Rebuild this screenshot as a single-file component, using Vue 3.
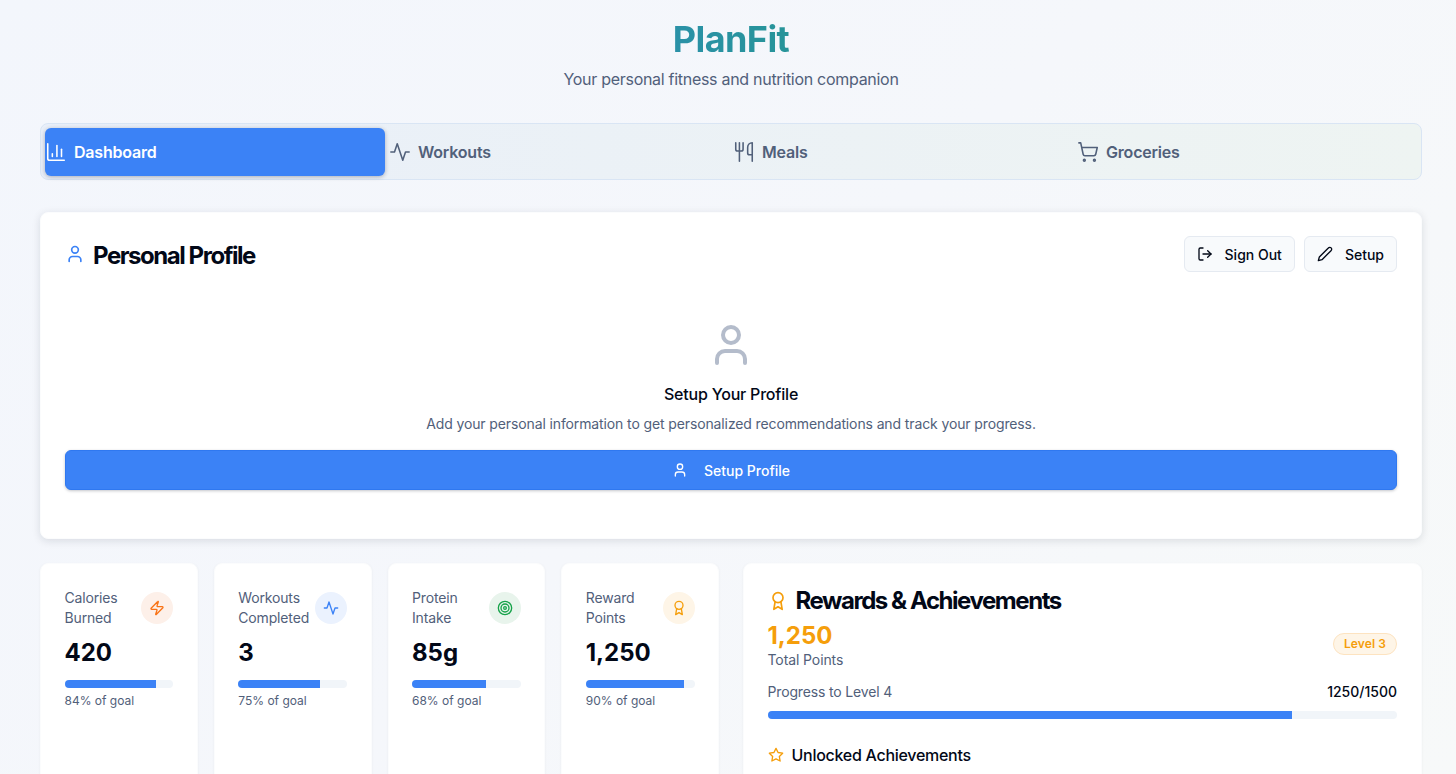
<script setup>
const circle = (cx, cy, r) => `M${cx - r} ${cy}a${r} ${r} 0 1 0 ${r * 2} 0a${r} ${r} 0 1 0 ${-r * 2} 0`

const icons = {
  chart: ['M3 3v16a2 2 0 0 0 2 2h16', 'M18 17V9', 'M13 17V5', 'M8 17v-3'],
  activity: ['M22 12h-4l-3 9L9 3l-3 9H2'],
  meals: ['M3 2v7c0 1.1.9 2 2 2h4a2 2 0 0 0 2-2V2', 'M7 2v20', 'M21 15V2a5 5 0 0 0-5 5v6c0 1.1.9 2 2 2h3Zm0 0v7'],
  cart: [circle(8, 21, 1), circle(19, 21, 1), 'M2.05 2.05h2l2.66 12.42a2 2 0 0 0 2 1.58h9.78a2 2 0 0 0 1.95-1.57l1.65-7.43H5.12'],
  zap: ['M4 14a1 1 0 0 1-.78-1.63l9.9-10.2a.5.5 0 0 1 .86.46l-1.92 6.02A1 1 0 0 0 13 10h7a1 1 0 0 1 .78 1.63l-9.9 10.2a.5.5 0 0 1-.86-.46l1.92-6.02A1 1 0 0 0 11 14z'],
  target: [circle(12, 12, 10), circle(12, 12, 6), circle(12, 12, 2)],
  award: [circle(12, 8, 6), 'M15.477 12.89 17 22l-5-3-5 3 1.523-9.11'],
  user: ['M19 21v-2a4 4 0 0 0-4-4H9a4 4 0 0 0-4 4v2', circle(12, 7, 4)],
}

const tabs = [
  { label: 'Dashboard', icon: 'chart', active: true },
  { label: 'Workouts', icon: 'activity' },
  { label: 'Meals', icon: 'meals' },
  { label: 'Groceries', icon: 'cart' },
]

const stats = [
  { label: 'Calories Burned', value: '420', percent: 84, icon: 'zap', tone: 'orange' },
  { label: 'Workouts Completed', value: '3', percent: 75, icon: 'activity', tone: 'blue' },
  { label: 'Protein Intake', value: '85g', percent: 68, icon: 'target', tone: 'green' },
  { label: 'Reward Points', value: '1,250', percent: 90, icon: 'award', tone: 'amber' },
]
</script>

<template>
  <div class="page">
    <header class="hero">
      <h1 class="brand">PlanFit</h1>
      <p class="tagline">Your personal fitness and nutrition companion</p>
    </header>

    <nav class="tabs">
      <button v-for="tab in tabs" :key="tab.label" class="tab" :class="{ active: tab.active }">
        <svg class="tab-icon" viewBox="0 0 24 24"><path v-for="d in icons[tab.icon]" :key="d" :d="d" /></svg>
        {{ tab.label }}
      </button>
    </nav>

    <section class="card profile">
      <div class="profile-head">
        <h2 class="card-title">
          <svg class="title-icon blue" viewBox="0 0 24 24"><path v-for="d in icons.user" :key="d" :d="d" /></svg>
          <span class="profile-title-text">Personal Profile</span>
        </h2>
        <div class="actions">
          <button class="ghost">
            <svg class="btn-icon" viewBox="0 0 24 24">
              <path d="M9 21H5a2 2 0 0 1-2-2V5a2 2 0 0 1 2-2h4" />
              <path d="M16 17l5-5-5-5" />
              <path d="M21 12H9" />
            </svg>
            Sign Out
          </button>
          <button class="ghost">
            <svg class="btn-icon" viewBox="0 0 24 24">
              <path d="M17 3a2.85 2.83 0 1 1 4 4L7.5 20.5 2 22l1.5-5.5Z" />
            </svg>
            Setup
          </button>
        </div>
      </div>

      <div class="empty">
        <svg class="empty-icon" viewBox="0 0 24 24"><path v-for="d in icons.user" :key="d" :d="d" /></svg>
        <h3 class="empty-title">Setup Your Profile</h3>
        <p class="empty-text">Add your personal information to get personalized recommendations and track your progress.</p>
        <button class="primary">
          <svg class="btn-icon" viewBox="0 0 24 24"><path v-for="d in icons.user" :key="d" :d="d" /></svg>
          Setup Profile
        </button>
      </div>
    </section>

    <div class="lower">
      <div class="stats">
        <div v-for="stat in stats" :key="stat.label" class="card stat">
          <div class="stat-head">
            <span class="stat-label">{{ stat.label }}</span>
            <span class="stat-badge" :class="stat.tone">
              <svg class="stat-icon" viewBox="0 0 24 24"><path v-for="d in icons[stat.icon]" :key="d" :d="d" /></svg>
            </span>
          </div>
          <div class="stat-value">{{ stat.value }}</div>
          <div class="bar"><div class="fill" :style="{ width: stat.percent + '%' }"></div></div>
          <div class="stat-note">{{ stat.percent }}% of goal</div>
        </div>
      </div>

      <section class="card rewards">
        <h2 class="card-title rewards-title">
          <svg class="title-icon amber-text" viewBox="0 0 24 24"><path v-for="d in icons.award" :key="d" :d="d" /></svg>
          Rewards &amp; Achievements
        </h2>
        <div class="points-row">
          <div>
            <div class="points">1,250</div>
            <div class="points-label">Total Points</div>
          </div>
          <span class="level">Level 3</span>
        </div>
        <div class="progress-row">
          <span class="progress-label">Progress to Level 4</span>
          <span class="progress-count">1250/1500</span>
        </div>
        <div class="bar"><div class="fill" style="width: 83.33%"></div></div>
        <h3 class="unlocked">
          <svg class="btn-icon amber-text" viewBox="0 0 24 24">
            <path d="M12 2l3.09 6.26L22 9.27l-5 4.87 1.18 6.88L12 17.77l-6.18 3.25L7 14.14 2 9.27l6.91-1.01L12 2z" />
          </svg>
          Unlocked Achievements
        </h3>
      </section>
    </div>
  </div>
</template>

<style scoped>
.page {
  height: 100vh;
  overflow: hidden;
  box-sizing: border-box;
  padding: 19px 34px 0 40px;
  font-family: Inter, "Liberation Sans", sans-serif;
  color: #020817;
  background: linear-gradient(135deg, #f3f6fc 0%, #f5f7fb 50%, #f7f9f9 100%);
}

svg {
  fill: none;
  stroke: currentColor;
  stroke-width: 2;
  stroke-linecap: round;
  stroke-linejoin: round;
  flex-shrink: 0;
}

button {
  font-family: inherit;
}

.hero {
  text-align: center;
  margin-bottom: 32px;
}

.brand {
  margin: 0 0 8px;
  font-size: 36px;
  line-height: 40px;
  font-weight: 700;
  letter-spacing: -0.6px;
  background: linear-gradient(90deg, #3b82f6, #16a34a);
  -webkit-background-clip: text;
  background-clip: text;
  color: transparent;
}

.tagline {
  margin: 0;
  font-size: 16px;
  line-height: 24px;
  letter-spacing: -0.29px;
  color: #51607a;
}

.tabs {
  display: grid;
  grid-template-columns: repeat(4, 1fr);
  gap: 4px;
  padding: 4px 4px 3px;
  height: 57px;
  box-sizing: border-box;
  border: 1px solid #d9e5f4;
  border-radius: 8px;
  background: linear-gradient(90deg, #e9eff9, #eef4f2);
  margin-bottom: 32px;
}

.tab {
  display: flex;
  align-items: center;
  gap: 7px;
  padding: 0;
  border: none;
  border-radius: 6px;
  background: none;
  font-size: 16px;
  font-weight: 600;
  letter-spacing: -0.2px;
  color: #51607a;
}

.tab.active {
  background: #3b82f6;
  color: #fff;
  box-shadow: 0 1px 4px rgba(15, 23, 42, 0.3);
}

.tab-icon {
  width: 22px;
  height: 22px;
  stroke-width: 1.7;
}

.card {
  box-sizing: border-box;
  background: #fff;
  border: 1px solid #fbfcfd;
  border-radius: 8px;
  box-shadow: 0 1px 3px rgba(15, 23, 42, 0.05);
}

.profile {
  padding: 23px 24px 24px;
  margin-bottom: 24px;
  box-shadow: 0 2px 8px rgba(15, 23, 42, 0.12);
}

.profile-head {
  display: flex;
  justify-content: space-between;
  align-items: center;
}

.card-title {
  display: flex;
  align-items: center;
  gap: 8px;
  margin: 0;
  font-size: 24px;
  line-height: 32px;
  font-weight: 700;
  letter-spacing: -1.45px;
}

.profile-title-text {
  padding-top: 3px;
}

.title-icon {
  width: 20px;
  height: 20px;
}

.blue {
  color: #3b82f6;
}

.amber-text {
  color: #f59e0b;
}

.actions {
  display: flex;
  gap: 9px;
}

.ghost {
  display: flex;
  align-items: center;
  gap: 12px;
  height: 36px;
  padding: 0 12px;
  border: 1px solid #e5eaf1;
  border-radius: 6px;
  background: #f8fafc;
  font-size: 14px;
  font-weight: 500;
  color: #020817;
}

.btn-icon {
  width: 16px;
  height: 16px;
}

.empty {
  display: flex;
  flex-direction: column;
  align-items: center;
  padding: 49px 0 24px;
}

.empty-icon {
  width: 48px;
  height: 48px;
  color: #b4bccb;
  margin-bottom: 13px;
}

.empty-title {
  margin: 0 0 8px;
  font-size: 16px;
  line-height: 24px;
  font-weight: 500;
  letter-spacing: -0.2px;
}

.empty-text {
  margin: 0 0 16px;
  font-size: 14px;
  line-height: 20px;
  letter-spacing: -0.12px;
  color: #51607a;
}

.primary {
  display: flex;
  align-items: center;
  justify-content: center;
  gap: 16px;
  width: 100%;
  height: 40px;
  border: 1px solid #2f78f0;
  border-radius: 6px;
  background: #3b82f6;
  color: #fff;
  font-size: 14px;
  font-weight: 500;
  box-shadow: 0 1px 3px rgba(15, 23, 42, 0.25);
}

.lower {
  display: grid;
  grid-template-columns: 1fr 1fr;
  gap: 24px;
  min-height: 320px;
}

.stats {
  display: grid;
  grid-template-columns: repeat(4, 1fr);
  gap: 16px;
}

.stat {
  padding: 24px 23.5px;
}

.stat-head {
  display: flex;
  justify-content: space-between;
  align-items: center;
}

.stat-label {
  font-size: 14px;
  line-height: 20px;
  letter-spacing: -0.15px;
  color: #51607a;
  max-width: 72px;
}

.stat-badge {
  display: flex;
  align-items: center;
  justify-content: center;
  width: 32px;
  height: 32px;
  border-radius: 50%;
  flex-shrink: 0;
}

.stat-icon {
  width: 16px;
  height: 16px;
}

.orange {
  background: #fdf0e9;
  color: #f97316;
}

.stat-badge.blue {
  background: #ebf2fe;
  color: #3b82f6;
}

.green {
  background: #e8f4ec;
  color: #16a34a;
}

.amber {
  background: #fef5e7;
  color: #f59e0b;
}

.stat-value {
  margin: 9px 0 11px;
  font-size: 24px;
  line-height: 32px;
  font-weight: 700;
}

.bar {
  height: 8px;
  border-radius: 4px;
  background: #f1f5f9;
  overflow: hidden;
}

.fill {
  height: 100%;
  background: #3b82f6;
}

.stat-note {
  margin-top: 5px;
  font-size: 12px;
  line-height: 16px;
  color: #51607a;
}

.rewards {
  padding: 24px 24px 24px 23.5px;
}

.rewards-title {
  line-height: 26px;
  margin-bottom: 6px;
}

.points-row {
  display: flex;
  justify-content: space-between;
  align-items: center;
  margin-bottom: 12px;
}

.points {
  font-size: 24px;
  line-height: 32px;
  font-weight: 700;
  color: #f59e0b;
  margin-bottom: -2px;
}

.points-label {
  font-size: 14px;
  line-height: 20px;
  letter-spacing: -0.1px;
  color: #51607a;
}

.level {
  padding: 2px 10px;
  margin-bottom: 2px;
  border: 1px solid #fde3c0;
  border-radius: 999px;
  background: #fef5e7;
  font-size: 12px;
  line-height: 16px;
  font-weight: 600;
  letter-spacing: 0.1px;
  color: #f59e0b;
}

.progress-row {
  display: flex;
  justify-content: space-between;
  margin-bottom: 9px;
  font-size: 14px;
  line-height: 20px;
}

.progress-label {
  color: #51607a;
  letter-spacing: -0.15px;
}

.progress-count {
  font-weight: 500;
}

.unlocked {
  display: flex;
  align-items: center;
  gap: 8px;
  margin: 24px 0 0;
  font-size: 16px;
  line-height: 24px;
  font-weight: 500;
  letter-spacing: -0.28px;
}
</style>
